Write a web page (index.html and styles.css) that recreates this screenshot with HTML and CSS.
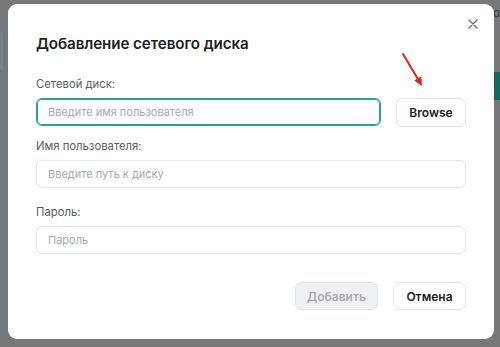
FILE: index.html
```html
<!DOCTYPE html>
<html lang="ru">

<head>
    <meta charset="UTF-8" />
    <title>Добавление сетевого диска</title>
    <link rel="stylesheet" href="styles.css">
</head>

<body>
    <div class="page-peek">
        <span class="peek-text">об</span>
        <span class="peek-tab"></span>
        <span class="peek-left"></span>
    </div>

    <div class="overlay">
        <div class="modal">
            <button class="close" aria-label="Закрыть">
                <svg width="10" height="10" viewBox="0 0 10 10">
                    <path d="M1 1L9 9M9 1L1 9" stroke="#6d6e75" stroke-width="1.3" stroke-linecap="round" />
                </svg>
            </button>

            <h1>Добавление сетевого диска</h1>

            <div class="field first">
                <label for="disk">Сетевой диск:</label>
                <div class="row">
                    <input type="text" id="disk" class="focused" placeholder="Введите имя пользователя">
                    <button class="btn">Browse</button>
                </div>
            </div>

            <div class="field second">
                <label for="user">Имя пользователя:</label>
                <input type="text" id="user" placeholder="Введите путь к диску">
            </div>

            <div class="field">
                <label for="pass">Пароль:</label>
                <input type="password" id="pass" placeholder="Пароль">
            </div>

            <div class="footer">
                <button class="btn" disabled>Добавить</button>
                <button class="btn btn-cancel">Отмена</button>
            </div>

            <svg class="arrow" width="30" height="40" viewBox="0 0 30 40">
                <path d="M3 3L18.5 29" stroke="#e8201a" stroke-width="2" stroke-linecap="round" />
                <path d="M22 35L14.2 29.6L21.3 25.4Z" fill="#e8201a" />
            </svg>
        </div>
    </div>
</body>

</html>
```

FILE: styles.css
```css
:root {
    --bg: #76787a;
    --text: #1d1d1f;
    --label: #5b5c60;
    --placeholder: #a8a9ae;
    --border: #e3e3e8;
    --accent: #2aa58a;
    --radius: 6px
}

* {
    box-sizing: border-box
}

html,
body {
    height: 100%
}

body {
    margin: 0;
    font-family: "Inter", "Noto Sans", sans-serif;
    background: var(--bg);
    color: var(--text);
    overflow: hidden;
    position: relative
}

.page-peek {
    position: absolute;
    inset: 0
}

.peek-text {
    position: absolute;
    top: 5px;
    left: 493px;
    font-size: 12px;
    color: #2e3033
}

.peek-tab {
    position: absolute;
    top: 72px;
    left: 493px;
    width: 7px;
    height: 28px;
    background: #0f6b5b
}

.peek-left {
    position: absolute;
    top: 32px;
    left: 0;
    width: 3px;
    height: 38px;
    background: #7e8083;
    border-radius: 0 2px 2px 0
}

.overlay {
    position: relative;
    padding: 4px 6px 8px 8px
}

.modal {
    position: relative;
    background: #fff;
    border-radius: 9px;
    height: 335px;
    padding: 30px 28px 28px
}

.close {
    position: absolute;
    top: 15px;
    right: 16px;
    width: 10px;
    height: 10px;
    padding: 0;
    border: none;
    background: none;
    display: flex
}

h1 {
    margin: 0 0 22px;
    font-size: 15.2px;
    line-height: 20px;
    font-weight: 600;
    letter-spacing: -0.1px
}

.field {
    display: flex;
    flex-direction: column;
    gap: 6px
}

.field.first {
    margin-bottom: 11px
}

.field.second {
    margin-bottom: 16px
}

label {
    font-size: 11.3px;
    line-height: 16px;
    color: var(--label)
}

.row {
    display: flex;
    gap: 15px
}

input {
    width: 100%;
    height: 28px;
    padding: 0 11px;
    border: 1px solid var(--border);
    border-radius: var(--radius);
    font: inherit;
    font-size: 11px;
    color: var(--text);
    outline: none
}

.row input {
    flex: 1;
    width: auto
}

input::placeholder {
    color: var(--placeholder)
}

input.focused {
    border-color: var(--accent);
    box-shadow: inset 0 0 0 1px var(--accent)
}

.btn {
    height: 28px;
    padding: 0 10px;
    border: 1px solid var(--border);
    border-radius: var(--radius);
    background: #fff;
    font: inherit;
    font-size: 12px;
    font-weight: 600;
    color: var(--text);
    cursor: pointer
}

.row .btn {
    width: 70px;
    height: 29px
}

.btn[disabled] {
    background: #f0f1f4;
    color: #a9abb1;
    width: 83px;
    cursor: not-allowed
}

.btn-cancel {
    width: 73px
}

.footer {
    margin-top: 28px;
    display: flex;
    justify-content: flex-end;
    gap: 15px
}

.arrow {
    position: absolute;
    top: 47px;
    left: 392px
}
```
